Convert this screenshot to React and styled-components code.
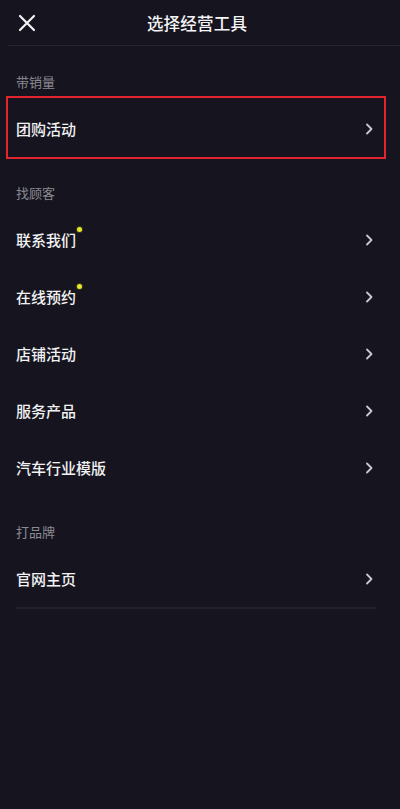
import React from "react";
import styled, { createGlobalStyle } from "styled-components";

const Global = createGlobalStyle`
    html, body {
        margin: 0;
        padding: 0;
        background: #16151f;
    }
    body {
        font-family: "Noto Sans CJK SC", "Noto Sans", sans-serif;
    }
`;

const Page = styled.div`
    width: 400px;
    min-height: 809px;
    background: #16151f;
    color: #ffffff;
`;

const Header = styled.header`
    position: relative;
    height: 46px;
    display: flex;
    align-items: center;
    justify-content: center;
    margin-left: 8px;
    border-bottom: 1px solid #26252f;
    box-sizing: border-box;
`;

const CloseButton = styled.button`
    position: absolute;
    left: 9px;
    top: 13px;
    width: 20px;
    height: 20px;
    padding: 0;
    border: none;
    background: none;
    display: flex;
    align-items: center;
    justify-content: center;
`;

const Title = styled.h1`
    margin: 0 14px 0 0;
    font-size: 16.5px;
    font-weight: 500;
    letter-spacing: 0.2px;
    color: #f4f4f6;
`;

const Section = styled.section`
    padding-top: 26px;
    margin: ${props => (props.$last ? "0 24px 0 16px" : "0")};
    border-bottom: ${props => (props.$last ? "2px solid #22212c" : "none")};
`;

const SectionLabel = styled.div`
    height: 20px;
    line-height: 20px;
    padding-left: ${props => (props.$flush ? "0" : "16px")};
    margin-bottom: 8px;
    font-size: 13px;
    color: #8b8a93;
`;

const Row = styled.div`
    box-sizing: border-box;
    height: 57px;
    display: flex;
    align-items: center;
    justify-content: space-between;
    padding: ${props => (props.$flush ? "0 3px 0 0" : "0 27px 0 16px")};
`;

// the red frame drawn round the first tool
const MarkedRow = styled(Row)`
    height: 63px;
    margin: -4px 14px -2px 6px;
    padding: 2px 11px 0 8px;
    border: 2px solid #e3262d;
`;

const ItemText = styled.span`
    position: relative;
    font-size: 15px;
    font-weight: 500;
    color: #f2f2f4;
`;

const Dot = styled.i`
    position: absolute;
    top: -2px;
    right: -6px;
    width: 5px;
    height: 5px;
    border-radius: 50%;
    background: #e8e82c;
    box-shadow: 0 0 0 1px #3a3a18;
`;

function Chevron() {
    return (
        <svg width="8" height="12" viewBox="0 0 8 12">
            <path d="M2 1.5 L6.5 6 L2 10.5" fill="none" stroke="#c9c9ce" strokeWidth="1.8" strokeLinecap="round" strokeLinejoin="round" />
        </svg>
    );
}

const sections = [
    { label: "带销量", items: [{ name: "团购活动", marked: true }] },
    {
        label: "找顾客",
        items: [
            { name: "联系我们", dot: true },
            { name: "在线预约", dot: true },
            { name: "店铺活动" },
            { name: "服务产品" },
            { name: "汽车行业模版" },
        ],
    },
    { label: "打品牌", items: [{ name: "官网主页" }], last: true },
];

export default function App() {
    return (
        <Page>
            <Global />
            <Header>
                <CloseButton aria-label="关闭">
                    <svg width="18" height="18" viewBox="0 0 18 18">
                        <path d="M2 2 L16 16 M16 2 L2 16" stroke="#f2f2f4" strokeWidth="2.2" strokeLinecap="round" />
                    </svg>
                </CloseButton>
                <Title>选择经营工具</Title>
            </Header>

            {sections.map(section => (
                <Section key={section.label} $last={section.last}>
                    <SectionLabel $flush={section.last}>{section.label}</SectionLabel>
                    {section.items.map(item => {
                        const RowTag = item.marked ? MarkedRow : Row;
                        return (
                            <RowTag key={item.name} $flush={section.last}>
                                <ItemText>
                                    {item.name}
                                    {item.dot && <Dot />}
                                </ItemText>
                                <Chevron />
                            </RowTag>
                        );
                    })}
                </Section>
            ))}
        </Page>
    );
}
